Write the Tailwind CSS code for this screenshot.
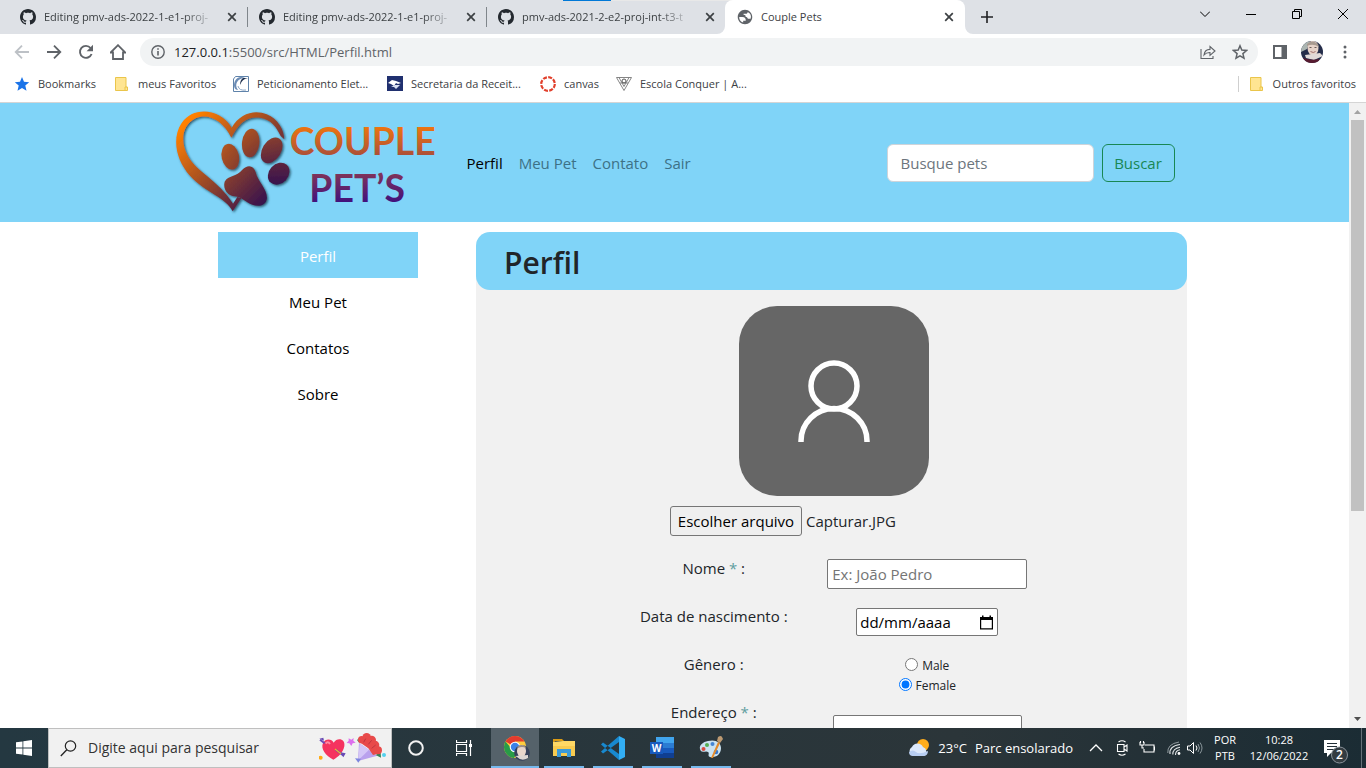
<!DOCTYPE html>
<html lang="pt-BR">
<head>
<meta charset="utf-8">
<title>Couple Pets</title>
<script src="https://cdn.jsdelivr.net/npm/@tailwindcss/browser@4"></script>
</head>
<body class="flex h-screen flex-col overflow-hidden bg-white font-['Open_Sans','Noto_Sans',sans-serif] text-[15px] leading-6 text-[#212529]">

<svg class="hidden" aria-hidden="true">
  <symbol id="github" viewBox="0 0 16 16"><path fill="#24292f" d="M8 0C3.58 0 0 3.58 0 8c0 3.54 2.29 6.53 5.47 7.59.4.07.55-.17.55-.38 0-.19-.01-.82-.01-1.49-2.01.37-2.53-.49-2.69-.94-.09-.23-.48-.94-.82-1.13-.28-.15-.68-.52-.01-.53.63-.01 1.08.58 1.23.82.72 1.21 1.87.87 2.33.66.07-.52.28-.87.51-1.07-1.78-.2-3.64-.89-3.64-3.95 0-.87.31-1.59.82-2.15-.08-.2-.36-1.02.08-2.12 0 0 .67-.21 2.2.82.64-.18 1.32-.27 2-.27.68 0 1.36.09 2 .27 1.53-1.04 2.2-.82 2.2-.82.44 1.1.16 1.92.08 2.12.51.56.82 1.27.82 2.15 0 3.07-1.87 3.75-3.65 3.95.29.25.54.73.54 1.48 0 1.07-.01 1.93-.01 2.2 0 .21.15.46.55.38A8.01 8.01 0 0016 8c0-4.42-3.58-8-8-8z"/></symbol>
  <symbol id="close" viewBox="0 0 10 10"><path d="M1.2 1.2l7.6 7.6M8.8 1.2L1.200 8.8" stroke="#3c4043" stroke-width="1.7" fill="none"/></symbol>
  <symbol id="folder" viewBox="0 0 16 16"><path d="M1.500 1.500h10.500v9.500h1.500v3.500h-12z" fill="#ffe592" stroke="#eac54b"/><path d="M11 14.500v-3.500h1.500" fill="none" stroke="#eac54b"/></symbol>
</svg>

<!-- Tab strip -->
<header class="relative flex h-[34px] shrink-0 bg-[#dee1e6] pl-2 text-[11px] text-[#3c4043]">
  <div class="absolute left-[563px] top-0 flex h-px w-[241px] bg-[#e8e8e8]"><span class="w-12 bg-[#0078d7]"></span></div>
  <div class="flex w-[239px] items-center pl-3 pr-2.5">
    <svg class="size-4 shrink-0"><use href="#github"/></svg>
    <span class="ml-2 whitespace-nowrap [mask-image:linear-gradient(to_right,black_85%,#0004)]">Editing pmv-ads-2022-1-e1-proj-</span>
    <button class="ml-auto" aria-label="Fechar guia"><svg class="size-2.5"><use href="#close"/></svg></button>
  </div>
  <div class="flex w-[239px] items-center pr-2.5">
    <span class="mr-[11px] h-5 w-px bg-[#80868b]"></span>
    <svg class="size-4 shrink-0"><use href="#github"/></svg>
    <span class="ml-2 whitespace-nowrap [mask-image:linear-gradient(to_right,black_85%,#0004)]">Editing pmv-ads-2022-1-e1-proj-</span>
    <button class="ml-auto" aria-label="Fechar guia"><svg class="size-2.5"><use href="#close"/></svg></button>
  </div>
  <div class="flex w-[239px] items-center pr-2.5">
    <span class="mr-[11px] h-5 w-px bg-[#80868b]"></span>
    <svg class="size-4 shrink-0"><use href="#github"/></svg>
    <span class="ml-2 whitespace-nowrap [mask-image:linear-gradient(to_right,black_85%,#0004)]">pmv-ads-2021-2-e2-proj-int-t3-t</span>
    <button class="ml-auto" aria-label="Fechar guia"><svg class="size-2.5"><use href="#close"/></svg></button>
  </div>
  <div class="relative flex w-[240px] items-center rounded-t-lg bg-white pl-3 pr-[11px]">
    <svg class="absolute -left-2 bottom-0 size-2" viewBox="0 0 8 8"><path d="M8 0v8H0a8 8 0 008-8z" fill="#fff"/></svg>
    <svg class="absolute -right-2 bottom-0 size-2" viewBox="0 0 8 8"><path d="M0 0v8h8a8 8 0 01-8-8z" fill="#fff"/></svg>
    <svg class="size-4 shrink-0" viewBox="1 1 22 22"><path fill="#5f6368" d="M12 2C6.480 2 2 6.480 2 12s4.480 10 10 10 10-4.480 10-10S17.520 2 12 2zM4 12h4.400c3.400 0 4.900 1.700 4.600 5.300H9.500v2.300A8 8 0 014 12zm12 2.500c-.6-1.600-1.300-2.500-3-2.500 0-2.300-.9-3.300-3-3.200V7.500h3.200c1.500 0 2.500-1 2.500-2.500a8 8 0 014 9.500z"/></svg>
    <span class="ml-2">Couple Pets</span>
    <button class="ml-auto" aria-label="Fechar guia"><svg class="size-2.5"><use href="#close"/></svg></button>
  </div>
  <button class="ml-4 flex items-center" aria-label="Nova guia"><svg class="size-3" viewBox="0 0 12 12"><path d="M6 0v12M0 6h12" stroke="#202124" stroke-width="1.600"/></svg></button>
  <div class="ml-auto flex h-7 items-center gap-9 pr-[18px] text-black">
    <button aria-label="Pesquisar guias"><svg class="size-2.5" viewBox="0 0 10 10"><path d="M0 2.500l5 5 5-5" fill="none" stroke="currentColor"/></svg></button>
    <button aria-label="Minimizar"><svg class="size-2.5" viewBox="0 0 10 10"><path d="M0 5.500h10" stroke="currentColor"/></svg></button>
    <button aria-label="Restaurar"><svg class="size-2.5" viewBox="0 0 10 10"><path d="M.5 2.500h7v7h-7zM2.500 2.500v-2h7v7h-2" fill="none" stroke="currentColor"/></svg></button>
    <button aria-label="Fechar"><svg class="size-2.5" viewBox="0 0 10 10"><path d="M0 0l10 10M10 0L0 10" stroke="currentColor"/></svg></button>
  </div>
</header>

<!-- Toolbar -->
<div class="flex h-9 shrink-0 items-center pl-3.5 pr-[15px] text-[#5f6368]">
  <nav class="flex gap-4" aria-label="Navegação">
    <button class="text-[#bdc1c6]" aria-label="Voltar"><svg class="size-4" viewBox="0 0 16 16"><path d="M15 8H2M8 1.700L1.700 8 8 14.300" fill="none" stroke="currentColor" stroke-width="1.800"/></svg></button>
    <button aria-label="Avançar"><svg class="size-4" viewBox="0 0 16 16"><path d="M1 8h13M8 1.700L14.300 8 8 14.300" fill="none" stroke="currentColor" stroke-width="1.800"/></svg></button>
    <button aria-label="Recarregar"><svg class="size-4" viewBox="0 0 16 16"><path d="M13.600 10A6 6 0 1112.600 4" fill="none" stroke="currentColor" stroke-width="1.900"/><path d="M15 .8v6.400H8.600z" fill="currentColor"/></svg></button>
    <button aria-label="Página inicial"><svg class="size-4" viewBox="0 0 16 16"><path d="M.7 8.500L8 1.200l7.300 7.300H13V15H3V8.500z" fill="none" stroke="currentColor" stroke-width="1.800"/></svg></button>
  </nav>
  <div class="ml-3.5 flex h-7 flex-1 items-center rounded-full bg-[#f1f3f4] pl-[11px] pr-2.5">
    <svg class="size-3.5" viewBox="0 0 14 14"><circle cx="7" cy="7" r="6.200" fill="none" stroke="currentColor" stroke-width="1.400"/><path d="M7 6v4.500M7 3.300v1.500" stroke="currentColor" stroke-width="1.600"/></svg>
    <div class="ml-[9px] text-[13px] leading-5" role="textbox" aria-label="Endereço do site"><span class="text-[#202124]">127.0.0.1</span>:5500/src/HTML/Perfil.html</div>
    <div class="ml-auto flex gap-4">
      <button aria-label="Compartilhar"><svg class="size-4" viewBox="0 0 16 16"><path d="M1 5v9.500h12V12M4 11c.5-4 2.700-5.500 6-5.600V2.500L15 7l-5 4.300V8.500C7.500 8.400 5.700 9 4 11z" fill="none" stroke="currentColor" stroke-width="1.100"/></svg></button>
      <button aria-label="Favoritar"><svg class="size-4" viewBox="0 0 16 16"><path d="M8 1.800l1.800 4.300 4.700.4-3.600 3.100 1.100 4.600L8 11.800l-4 2.400 1.100-4.600L1.500 6.500l4.700-.4z" fill="none" stroke="currentColor" stroke-width="1.500"/></svg></button>
    </div>
  </div>
  <button class="ml-[15px]" aria-label="Painel lateral"><svg class="h-3.5 w-3.5" viewBox="0 0 14 14"><path d="M0 0h14v14H0zM2 2v10h6.500V2z" fill="currentColor" fill-rule="evenodd"/></svg></button>
  <button class="ml-3.5" aria-label="Perfil do navegador"><svg class="size-[22px]" viewBox="0 0 22 22"><defs><clipPath id="av"><circle cx="11" cy="11" r="11"/></clipPath></defs><g clip-path="url(#av)"><rect width="22" height="22" fill="#252d4a"/><path d="M0 0h9l-3 8-6 3z" fill="#abb5b1"/><ellipse cx="12" cy="7" rx="5.500" ry="7.500" fill="#e6d2c8"/><path d="M6 3q5-5 11 0l1 3q-6-4-12-1z" fill="#a89a90"/><path d="M8.500 6.500h2m3 0h2" stroke="#695a56"/><path d="M9.500 10.500q3 2 5 0" stroke="#9e6f6c" fill="none"/><path d="M4 14l15-2 3 3-9 4-8-2z" fill="#e0d9d7"/><path d="M2 17q9 3 16 1v5H2z" fill="#571b30"/></g></svg></button>
  <button class="ml-4" aria-label="Menu"><svg class="h-4 w-3" viewBox="0 0 12 16" fill="currentColor"><circle cx="6" cy="3" r="1.500"/><circle cx="6" cy="8" r="1.500"/><circle cx="6" cy="13" r="1.500"/></svg></button>
</div>

<!-- Bookmarks bar -->
<div class="flex h-[33px] shrink-0 items-center whitespace-nowrap border-b border-[#d5d5d5] pb-1 pl-3.5 pr-2.5 text-[11px] text-[#3c4043]">
  <a href="#" class="flex w-[100px] items-center gap-2"><svg class="size-4" viewBox="0 0 16 16"><path fill="#1a73e8" d="M8 1l2 4.700 5.200.5-3.900 3.400 1.200 5.100L8 12l-4.500 2.700 1.200-5.100L.8 6.200 6 5.700z"/></svg>Bookmarks</a>
  <a href="#" class="flex w-[119px] items-center gap-2"><svg class="size-4"><use href="#folder"/></svg>meus Favoritos</a>
  <a href="#" class="flex w-[154px] items-center gap-2"><svg class="size-4" viewBox="0 0 16 16"><path d="M.5 3l2-2.500h13v15H.5z" fill="#fff" stroke="#5f83aa"/><path d="M12 2C4 2 1 9 5 14 1 14 0 9 2 5 4 1 8 0 12 2z" fill="#6d8db5"/><path d="M15 2Q9 3 7 9q0-5 3-7z" fill="#1f304e"/><path d="M5 10q1 5 8 4" fill="none" stroke="#8ba7c7"/></svg>Peticionamento Elet...</a>
  <a href="#" class="flex w-[153px] items-center gap-2"><svg class="size-4" viewBox="0 0 16 16"><path fill="#20306f" d="M0 0h16v15H0z"/><path d="M1 7l4-3 4 1 5 2-3 1-2-1-2 3-3-2z" fill="#fff"/><path d="M4 11l4-2 5 0-4 4-2-2z" fill="#d8dff1"/></svg>Secretaria da Receit...</a>
  <a href="#" class="flex w-[76px] items-center gap-2"><svg class="size-4" viewBox="0 0 16 16"><circle cx="8" cy="8" r="6.800" fill="none" stroke="#e13f2b" stroke-width="2.200" stroke-dasharray="4 1.340"/></svg>canvas</a>
  <a href="#" class="flex items-center gap-2"><svg class="size-4" viewBox="0 0 16 16"><path d="M.5 1.500h15l-7.500 13zM3 1.500l5 9 5-9M4 7h8" fill="none" stroke="#777" stroke-width=".9"/><circle cx="8" cy="5" r="2" fill="none" stroke="#555"/></svg>Escola Conquer | A...</a>
  <span class="ml-auto h-4 w-px bg-[#cfcfcf]"></span>
  <a href="#" class="ml-2.5 flex items-center gap-2"><svg class="size-4"><use href="#folder"/></svg>Outros favoritos</a>
</div>

<!-- Page -->
<div class="flex min-h-0 flex-1">
  <div class="min-w-0 flex-1 overflow-hidden">
    <header class="h-[119px] bg-[#80d4f8]">
      <div class="mx-auto flex h-full max-w-[1000px] items-center">
        <a href="#" aria-label="Couple Pet's">
          <svg class="h-[104px] w-[264px]" viewBox="30 30 792 312">
            <defs>
              <linearGradient id="g1" gradientUnits="userSpaceOnUse" x1="70" y1="60" x2="310" y2="300"><stop stop-color="#ff8000"/><stop offset="1" stop-color="#34104f"/></linearGradient>
              <linearGradient id="g2" gradientUnits="userSpaceOnUse" x1="0" y1="78" x2="0" y2="162"><stop stop-color="#ed7410"/><stop offset="1" stop-color="#ad5038"/></linearGradient>
              <linearGradient id="g3" gradientUnits="userSpaceOnUse" x1="0" y1="218" x2="0" y2="302"><stop stop-color="#803359"/><stop offset="1" stop-color="#42127c"/></linearGradient>
              <filter id="sh" x="-10%" y="-10%" width="125%" height="125%"><feDropShadow dx="4" dy="4" stdDeviation="3" flood-color="#143040" flood-opacity=".75"/></filter>
            </defs>
            <g fill="url(#g1)" filter="url(#sh)">
              <path d="M203 331C185 290 120 274 75 224C32 176 20 110 50 66C85 15 165 22 200 80C225 35 272 25 305 40C340 55 356 85 358 115L347 105C335 80 320 55 285 50C245 45 220 68 199 110C175 60 130 35 92 52C52 72 45 118 67 162C95 215 158 235 204 308L217 288L229 292Z"/>
              <ellipse cx="196" cy="167" rx="26" ry="39" transform="rotate(-12 196 167)"/>
              <ellipse cx="257" cy="126" rx="26" ry="43" transform="rotate(6 257 126)"/>
              <ellipse cx="320" cy="148" rx="28" ry="42" transform="rotate(32 320 148)"/>
              <ellipse cx="341" cy="218" rx="29" ry="36" transform="rotate(42 341 218)"/>
              <path d="M179 242C190 222 215 228 232 206C247 190 266 192 272 214C278 242 311 268 305 296C300 315 280 317 262 311C242 305 232 288 210 286C188 285 173 264 179 242Z"/>
            </g>
            <text x="374" y="161" font-family="Lato" font-weight="700" font-size="112" fill="url(#g2)">COUPLE</text>
            <text x="433" y="302" font-family="Lato" font-weight="700" font-size="112" fill="url(#g3)">PET’S</text>
          </svg>
        </a>
        <nav class="ml-7 flex gap-4 text-[#3d7186]" aria-label="Principal">
          <a href="#" class="text-black">Perfil</a><a href="#">Meu Pet</a><a href="#">Contato</a><a href="#">Sair</a>
        </nav>
        <form class="ml-auto flex gap-2">
          <input type="search" aria-label="Busque pets" placeholder="Busque pets" class="h-[38px] w-[207px] rounded-md border border-[#ced4da] bg-white px-[13px] placeholder:text-[#6c757d]">
          <button type="button" class="h-[38px] w-[73px] rounded-md border border-[#198754] text-[#198754]">Buscar</button>
        </form>
      </div>
    </header>

    <div class="flex gap-[58px] pl-[218px] pr-[162px] pt-2.5">
      <nav class="w-[200px] shrink-0 text-center text-black" aria-label="Seções">
        <a href="#" class="block bg-[#80d4f8] pb-2.5 pt-3 text-white">Perfil</a>
        <a href="#" class="block pb-2.5 pt-3">Meu Pet</a>
        <a href="#" class="block pb-2.5 pt-3">Contatos</a>
        <a href="#" class="block pb-2.5 pt-3">Sobre</a>
      </nav>
      <main class="min-w-0 flex-1 bg-[linear-gradient(white_29px,#f1f1f1_29px)] pb-10">
        <h1 class="flex h-[58px] items-center rounded-[14px] bg-[#80d4f8] pb-px pl-7 pt-1 text-[30px] font-semibold">Perfil</h1>
        <form class="pl-[131px] pt-4">
          <div class="w-[427px]">
            <svg class="ml-[132px] block size-[190px]" viewBox="0 0 190 190" role="img" aria-label="Foto de perfil"><rect width="190" height="190" rx="38" fill="#666"/><circle cx="95" cy="80" r="23" fill="none" stroke="#fff" stroke-width="5.500"/><path d="M62 136v-1a33 32.500 0 0166 0v1" fill="none" stroke="#fff" stroke-width="5.500"/></svg>
            <div class="ml-[63px] mt-2.5 flex h-[30px] items-center gap-1">
              <input id="foto" type="file" class="sr-only">
              <label for="foto" class="flex h-[30px] w-[132px] items-center justify-center rounded-[3px] border border-[#767676] bg-[#efefef] text-black">Escolher arquivo</label>
              <span>Capturar.JPG</span>
            </div>
            <div class="mt-5 grid auto-rows-[48px] grid-cols-2 justify-items-center">
              <label for="nome">Nome <span class="text-[#5f9ea0]">*</span> :</label>
              <input id="nome" type="text" placeholder="Ex: João Pedro" class="mt-[3px] h-[30px] w-[200px] rounded-[2px] border border-[#767676] bg-white px-1 placeholder:text-[#757575]">
              <label for="nascimento">Data de nascimento :</label>
              <div class="mt-1 flex h-7 w-[142px] items-center justify-between rounded-[2px] border border-[#767676] bg-white pl-[3px] pr-1">
                <input id="nascimento" type="text" placeholder="dd/mm/aaaa" class="w-[100px] placeholder:text-black">
                <button type="button" aria-label="Abrir calendário"><svg class="h-[15px] w-[13px]" viewBox="0 0 13 15"><path d="M.6 3h11.800v10.900H.6z" fill="none" stroke="#000" stroke-width="1.200"/><path d="M0 2h13v3H0zM2 .5h1.500V3H2zM9.500 .5H11V3H9.500z"/></svg></button>
              </div>
              <span>Gênero :</span>
              <div class="flex flex-col items-center pt-1 text-[12px] leading-5" role="radiogroup" aria-label="Gênero">
                <label class="flex items-center gap-1"><input type="radio" name="genero" class="-mt-1 size-[13px]">Male</label>
                <label class="flex items-center gap-1"><input type="radio" name="genero" checked class="-mt-1 size-[13px] accent-[#0075ff]">Female</label>
              </div>
              <label for="endereco">Endereço <span class="text-[#5f9ea0]">*</span> :</label>
              <input id="endereco" type="text" class="mt-[15px] h-[30px] w-[189px] rounded-[2px] border border-[#767676] bg-white px-1">
            </div>
          </div>
        </form>
      </main>
    </div>
  </div>
  <div class="flex w-[17px] shrink-0 flex-col items-center bg-[#f1f1f1]" aria-hidden="true">
    <svg class="size-[17px]" viewBox="0 0 17 17"><path d="M5 11l3.500-4 3.500 4z" fill="#a3a3a3"/></svg>
    <div class="h-[391px] w-[13px] bg-[#c1c1c1]"></div>
    <svg class="mt-auto size-[17px]" viewBox="0 0 17 17"><path d="M5 6l3.500 4L12 6z" fill="#505050"/></svg>
  </div>
</div>

<!-- Taskbar -->
<footer class="flex h-10 shrink-0 items-center whitespace-nowrap bg-linear-to-r from-[#243841] via-[#2b3539] via-70% to-[#1b2c34] text-white">
  <button class="flex w-12 justify-center" aria-label="Iniciar"><svg class="size-4" viewBox="0 0 16 16"><path fill="#fff" d="M0 2.300l6.500-.9v6.200H0zM7.300 1.300L16 0v7.600H7.300zM0 8.400h6.500v6.200L0 13.700zM7.300 8.400H16V16l-8.700-1.300z"/></svg></button>
  <div class="flex h-full w-[344px] items-center border border-[#bfbfbf] bg-[#f1f1f1] pl-[11px] pr-1">
    <svg class="size-[17px] shrink-0" viewBox="0 0 17 17"><circle cx="10.500" cy="6" r="5.200" fill="none" stroke="#222" stroke-width="1.200"/><path d="M6.800 9.700L.8 16" stroke="#222" stroke-width="1.300"/></svg>
    <input type="text" aria-label="Pesquisar" placeholder="Digite aqui para pesquisar" class="ml-[11px] w-[200px] text-[14px] placeholder:text-[#333]">
    <svg class="ml-auto h-[30px] w-[68px]" viewBox="0 0 204 90">
      <path d="M43 80C20 68 4 48 12 30c8-15 26-13 32-1C54 12 80 16 76 40 72 58 60 71 43 80z" fill="#f5335f"/><path d="M20 32q6-9 13 1" stroke="#ff8aa2" stroke-width="6" fill="none"/>
      <path d="M3 20l14 11M50 50l24 18" stroke="#6b4ab5" stroke-width="6"/><path d="M1 17l12-3 2 9M64 58l16 3-7 12z" fill="#684ab5"/><path d="M48 48l18 14" stroke="#f4b52a" stroke-width="4"/>
      <path d="M89 16l8 4 7-5-1 8 7 6-9 2-4 8-6-8-8-1 6-7z" fill="#dd70ed"/><circle cx="5" cy="74" r="6" fill="#ffaa13"/>
      <path d="M120 30l55 38-58 16z" fill="#b9a1ed"/><path d="M122 32l-4 50 32-32z" fill="#d4c6f7"/><path d="M108 76l18 1-8 12z" fill="#7d86dd"/>
      <path d="M121 30l-7-9 9-8M170 66l16 8-1-17" fill="#358256"/>
      <g fill="#e84a4a"><circle cx="128" cy="20" r="11"/><circle cx="143" cy="13" r="13"/><circle cx="158" cy="21" r="13"/><circle cx="168" cy="36" r="13"/><circle cx="177" cy="52" r="12"/><path d="M122 28l22-12 24 20 10 26-16 4-14-20z"/></g>
      <g fill="none" stroke="#bf363f" stroke-width="3"><path d="M134 28l6-11M148 34l10-12M158 46l12-10"/></g>
      <circle cx="195" cy="66" r="6" fill="#53d1ee"/>
    </svg>
  </div>
  <button class="flex w-12 justify-center" aria-label="Cortana"><svg class="size-4" viewBox="0 0 16 16"><circle cx="8" cy="8" r="6.800" fill="none" stroke="#f2f2f2" stroke-width="2"/></svg></button>
  <button class="flex w-[47px] justify-center" aria-label="Visão de tarefas"><svg class="size-4" viewBox="0 0 16 16"><path d="M.5 0v2.500h10V0M.5 16v-2.500h10V16M.5 4.500h10v7H.5zM14.500 0v16" fill="none" stroke="#fff" stroke-width="1.200"/><path d="M13 4h3v3h-3z" fill="#fff"/></svg></button>
  <button class="ml-1 flex h-full w-12 items-center justify-center border-b-2 border-[#76b9ed] bg-[#55626a] pl-1 pt-1" aria-label="Chrome"><svg class="size-[26px]" viewBox="0 0 26 26"><circle cx="11" cy="11" r="11" fill="#ffcd40"/><path d="M11 11L1.500 5.500A11 11 0 0120.500 5.500H11z" fill="#e33b2e"/><path d="M1.500 5.500A11 11 0 0010 22l5-8.500-4-2.500-4 1z" fill="#289b48"/><circle cx="11" cy="11" r="5.300" fill="#fff"/><circle cx="11" cy="11" r="4.200" fill="#3c82e8"/><circle cx="18" cy="17" r="7.800" fill="#35405b"/><ellipse cx="17.500" cy="15" rx="4.500" ry="6" fill="#e8d5cc"/><path d="M13 11q4-4 9 0v1q-4-2-8 0z" fill="#9b8c84"/><path d="M11 20l13-1v3q-6 4-11-1z" fill="#ddd5d3"/></svg></button>
  <button class="ml-[5px] flex h-full w-10 items-center justify-center border-b-2 border-[#76b9ed] pt-0.5" aria-label="Explorador de arquivos"><svg class="size-[22px]" viewBox="0 0 22 22"><path d="M0 2h9l2 2h-9L0 8z" fill="#dc9b14"/><path d="M0 5l10-1h12v15H0z" fill="#ffd865"/><path d="M0 9h22v10H0z" fill="#f8cb50"/><path d="M4 20v-8h14v8h-4v-4H8v4z" fill="#3b9ad8"/></svg></button>
  <button class="ml-[9px] flex h-full w-10 items-center justify-center border-b-2 border-[#76b9ed] pt-0.5" aria-label="Visual Studio Code"><svg class="size-6" viewBox="0 0 24 24"><path d="M18 0L0 15.500l2 2L18 6zM18 24L0 8.500l2-2L18 18z" fill="#1889cf"/><path d="M18 0l6 3v18l-6 3z" fill="#32aef4"/></svg></button>
  <button class="ml-[9px] flex h-full w-10 items-center justify-center border-b-2 border-[#76b9ed] pt-0.5" aria-label="Word"><svg class="size-6" viewBox="0 0 24 22"><path fill="#41a5ee" d="M6 0h18v6H6z"/><path fill="#2b7cd3" d="M6 6h18v5H6z"/><path fill="#185abd" d="M6 11h18v5H6z"/><path fill="#103f91" d="M6 16h18v5H6z"/><path fill="#185abd" d="M0 5h13v12H0z"/><text x="6.500" y="14.500" text-anchor="middle" font-family="Open Sans" font-weight="700" font-size="10" fill="#fff">W</text></svg></button>
  <button class="ml-[9px] flex h-full w-10 items-center justify-center border-b-2 border-[#76b9ed] pt-0.5" aria-label="Paint"><svg class="size-6" viewBox="0 0 24 24"><path d="M9 5c7-2 13 1 13 7 0 7-6 10-11 9-3-1 0-4-2-5-2-2-7 2-8-3C0 9 4 6 9 5z" fill="#cbe3f2"/><circle cx="4.500" cy="13" r="2" fill="#d84b3f"/><circle cx="8" cy="9" r="2" fill="#54ae54"/><circle cx="13.500" cy="8" r="2" fill="#4586d4"/><circle cx="17" cy="16" r="2.300" fill="#3478cf"/><path d="M12 22l7-16 2 1-7 15z" fill="#e28a2b"/><path d="M18 5l1-4q3-2 4 0l1 2-3 4z" fill="#bd9a72"/></svg></button>

  <div class="ml-auto flex h-full items-center text-[11px] leading-4">
    <svg class="size-[22px]" viewBox="0 0 22 22"><circle cx="15" cy="8" r="6" fill="#ffad1c"/><path d="M5 19a5 5 0 01-1-9 6 6 0 0111 0 5 5 0 011 9z" fill="#dce8fa"/><path d="M1 15q4-3 7 0t12-1q0 5-5 5H5q-4 0-4-4z" fill="#b7cdf1"/></svg>
    <span class="ml-2 text-[13px]">23°C</span><span class="ml-2 text-[13px]">Parc ensolarado</span>
    <div class="ml-4 flex items-center gap-2">
      <svg class="h-4 w-3.5" viewBox="0 0 14 16"><path d="M1 11l6-6 6 6" fill="none" stroke="#fff" stroke-width="1.300"/></svg>
      <svg class="ml-1 size-4" viewBox="0 0 16 16"><path d="M3.500 2q3.500-2.500 7 0M3.500 14q3.500 2.500 7 0M2.500 4.500h6.500v7H2.500zM9 7l3-2v6l-3-2" fill="none" stroke="#fff" stroke-width="1.100"/></svg>
      <svg class="size-4" viewBox="0 0 16 16"><path d="M6 5h9v7H5V9M15 7h1v3h-1M1 2v3h4V2M3 5v3h2M1.500 1v2M4.500 1v2" fill="none" stroke="#fff" stroke-width="1.100"/></svg>
      <svg class="ml-1 size-4" viewBox="0 0 16 16"><path d="M3 14Q2 6 13 4.500M5.800 14.500Q5.500 8.500 13 7.200M8.500 15q0-4.500 4.500-5.200" fill="none" stroke="#e2e6e8" stroke-width="1.100"/><path d="M.8 13Q0 4 12 2" fill="none" stroke="#8e989d"/><circle cx="12" cy="13.500" r="1.400" fill="#fff"/></svg>
      <svg class="-ml-1 size-4" viewBox="0 0 16 16"><path d="M.5 6h2.500l3.500-3.500v11L3 10H.5z" fill="none" stroke="#fff"/><path d="M9 5.500q2 2.500 0 5" fill="none" stroke="#fff"/><path d="M11 4q3 4 0 8M13 2.500q4 5.500 0 11" fill="none" stroke="#8a969b"/></svg>
    </div>
    <div class="ml-2 w-7 text-center">POR<br>PTB</div>
    <div class="ml-2 w-16 text-center">10:28<br>12/06/2022</div>
    <button class="ml-2.5 mr-3 flex pt-1" aria-label="Notificações: 2"><svg class="size-7" viewBox="0 0 28 28"><path d="M3 4h16v13H10l-4 4v-4H3z" fill="#fff"/><path d="M6 7.500h10M6 10.500h10M6 13.500h7" stroke="#243038"/><circle cx="18.500" cy="19" r="8" fill="#333c41" stroke="#89929a"/><text x="18.500" y="23" text-anchor="middle" font-family="Open Sans" font-weight="600" font-size="12" fill="#fff">2</text></svg></button>
    <span class="h-full w-[5px] border-l border-[#647178]"></span>
  </div>
</footer>
</body>
</html>
